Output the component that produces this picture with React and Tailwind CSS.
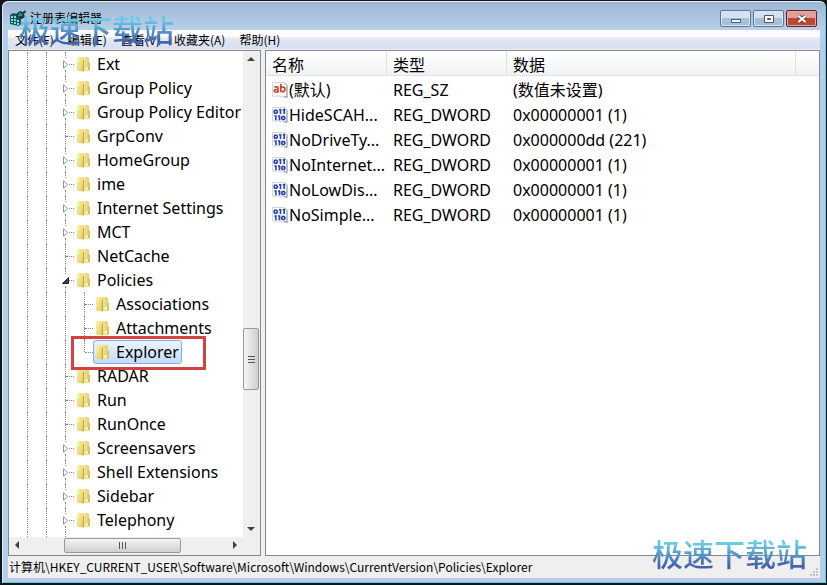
import React from "react";

const menus = ["文件(F)", "编辑(E)", "查看(V)", "收藏夹(A)", "帮助(H)"];

const keys = [
  { name: "Ext", state: "closed" },
  { name: "Group Policy", state: "closed" },
  { name: "Group Policy Editor", state: "closed" },
  { name: "GrpConv", state: "leaf" },
  { name: "HomeGroup", state: "closed" },
  { name: "ime", state: "closed" },
  { name: "Internet Settings", state: "closed" },
  { name: "MCT", state: "closed" },
  { name: "NetCache", state: "leaf" },
  { name: "Policies", state: "open" },
  { name: "Associations", state: "leaf", child: true },
  { name: "Attachments", state: "leaf", child: true },
  { name: "Explorer", state: "leaf", child: true, last: true, selected: true },
  { name: "RADAR", state: "leaf" },
  { name: "Run", state: "leaf" },
  { name: "RunOnce", state: "leaf" },
  { name: "Screensavers", state: "closed" },
  { name: "Shell Extensions", state: "closed" },
  { name: "Sidebar", state: "closed" },
  { name: "Telephony", state: "closed" },
];

const values = [
  ["(默认)", "REG_SZ", "(数值未设置)"],
  ["HideSCAH...", "REG_DWORD", "0x00000001 (1)"],
  ["NoDriveTy...", "REG_DWORD", "0x000000dd (221)"],
  ["NoInternet...", "REG_DWORD", "0x00000001 (1)"],
  ["NoLowDis...", "REG_DWORD", "0x00000001 (1)"],
  ["NoSimple...", "REG_DWORD", "0x00000001 (1)"],
];

function AppIcon() {
  return (
    <svg width="18" height="18" viewBox="0 0 18 18" aria-hidden="true">
      <path d="M1 6l3-2 8 2v9l-2 2-9-2z" fill="#16555a" />
      <path d="M2 7h2v2H2zM5 7h2v2H5zM2 10h2v2H2zM5 10h2v2H5zM8 11h2v2H8zM2 13h2v1H2zM5 13h2v2H5zM8 14h2v2H8z" fill="#7fe0d8" />
      <path d="M8 4l3-2 3 1 2-2 1 2-2 2 1 3-3 2-4-1-2-2z" fill="#173c44" />
      <path d="M10 4l2 1M13 5l-1 2M9 7l2-1" stroke="#65c9c4" fill="none" />
    </svg>
  );
}

function FolderIcon() {
  return (
    <svg className="shrink-0" width="14" height="16" viewBox="0 0 14 16" aria-hidden="true">
      <defs>
        <linearGradient id="folderBack" x1="0" x2="1">
          <stop offset="0" stopColor="#f6eca4" />
          <stop offset="1" stopColor="#dfca69" />
        </linearGradient>
        <linearGradient id="folderFront" x1="0" x2="1" y2="1">
          <stop offset="0" stopColor="#fbf3b0" />
          <stop offset="1" stopColor="#e0c750" />
        </linearGradient>
      </defs>
      <path d="M5 1h6l1 1v4l1 1v7l-1 1H5z" fill="url(#folderBack)" />
      <path d="M12 7v7" stroke="#d0ba5c" strokeWidth="1" />
      <path d="M0 2l1-1h4l2 2v11l-1 2-2-1H1l-1-1z" fill="url(#folderFront)" />
      <path d="M6.500 4v11" stroke="#bfa43e" strokeWidth="1" />
      <path d="M8 11h3v3H8z" fill="#f7efbe" />
    </svg>
  );
}

function ValueIcon({ text }) {
  return (
    <svg className="mb-[2px] shrink-0" width="16" height="16" viewBox="0 0 16 16" aria-hidden="true">
      <path d="M.5 .5h11l3.500 3v12l-3-1-3 .5-3-1.500-2 1-3.500-.5z" fill="#f7f9fc" stroke="#d0d5dc" />
      <path d="M12 .5l3 3v12l-3-1" fill="none" stroke="#8d96a1" />
      {text ? (
        <g fill="none" stroke="#c24a2c" strokeWidth="1.700">
          <path d="M2.300 4.800h2.700q1 0 1 1v4.200H3.700q-1.400 0-1.400-1.200T3.700 7.500H6" />
          <path d="M8.800 2v8M8.800 5.500q4.200-1.500 4.200 1.800T8.800 9.300" />
        </g>
      ) : (
        <g fill="none" stroke="#2a3fae" strokeWidth="1.600">
          <path d="M2.800 3.300h1.800l.7 1v1l-.7 1H2.800l-.6-1v-1zM7 2.800h1.500v4.200M10.700 2.800h1.500v4.200" />
          <path d="M2.400 9h1.500v4.200M6 9h1.500v4.200M10.300 9.500h1.800l.7 1v1l-.7 1h-1.800l-.6-1v-1z" />
        </g>
      )}
    </svg>
  );
}

function Branch({ state, last }) {
  return (
    <>
      <span className="flex h-6 w-[7px] shrink-0 flex-col items-center">
        <span className="w-0 flex-1 border-l border-dotted border-[#858585]" />
        {state !== "leaf" && (
          <button type="button" aria-label={state === "open" ? "折叠" : "展开"} className="flex h-3 w-[7px] items-center">
            <svg width="7" height="9" viewBox="0 0 7 9">
              {state === "open" ? (
                <path d="M6.500 1.500v6h-6z" fill="#404040" stroke="#262626" />
              ) : (
                <path d="M1.500 .8v7.400L5.800 4.500z" fill="#fff" stroke="#959595" />
              )}
            </svg>
          </button>
        )}
        <span className={last ? "w-0 flex-1" : "w-0 flex-1 border-l border-dotted border-[#858585]"} />
      </span>
      <span className={state === "leaf" ? "-ml-[3px] w-2 shrink-0 border-t border-dotted border-[#858585]" : "w-[5px] shrink-0 border-t border-dotted border-[#858585]"} />
    </>
  );
}

function Rails({ child }) {
  return (
    <>
      <span className="h-full w-[19px] shrink-0 border-l border-dotted border-[#858585]" />
      {child && <span className="h-full w-[19px] shrink-0 border-l border-dotted border-[#858585]" />}
      <span className="h-full w-4 shrink-0 border-l border-dotted border-[#858585]" />
    </>
  );
}

function TreeRow({ item }) {
  return (
    <li className="relative flex h-6 items-center pl-[18px]">
      <Rails child={item.child} />
      <Branch state={item.state} last={item.last} />
      <button
        type="button"
        className={
          item.selected
            ? "flex h-6 items-center gap-[6px] whitespace-nowrap rounded-[3px] border border-[#84acdd] bg-linear-to-b from-[#eaf3fd] to-[#c4dcf8] pl-[2px] pr-[2px]"
            : "flex h-6 items-center gap-[6px] whitespace-nowrap border border-transparent pl-[2px] pr-[2px]"
        }
      >
        <FolderIcon />
        <span>{item.name}</span>
      </button>
      {item.selected && (
        <span className="pointer-events-none absolute -top-1 left-[62px] z-10 h-[34px] w-[135px] border-3 border-[#d3423e]" />
      )}
    </li>
  );
}

function Arrow({ d, label }) {
  return (
    <button type="button" aria-label={label} className="flex size-4 shrink-0 items-center justify-center">
      <svg width="8" height="8" viewBox="0 0 8 8"><path d={d} fill="#404040" /></svg>
    </button>
  );
}

function Watermark() {
  return (
    <span className="bg-linear-to-b from-[#6cc9e2] from-25% to-[#4163ab] to-85% bg-clip-text font-['Noto_Sans_CJK_SC',sans-serif] text-[31px] leading-9 font-medium whitespace-nowrap text-transparent">
      极速下载站
    </span>
  );
}

export default function App() {
  return (
    <div className="h-screen overflow-hidden bg-[#10151c] pt-px pr-px pb-[2px] pl-[2px] font-['Noto_Sans','Noto_Sans_CJK_SC',sans-serif] text-black">
      <div className="relative flex h-full flex-col rounded-t-md border border-t-[#e4edf7] border-r-[#62c8e4] border-b-[#62c8e4] border-l-[#dce9f6] bg-[#b5cfea] px-[5px] pb-1">
        <header className="-mx-[5px] flex h-7 shrink-0 items-center justify-between rounded-t-md bg-linear-to-b from-[#9db6d3] to-[#b9d0ea] pr-2 pl-[6px]">
          <div className="flex items-center gap-[3px] pt-1">
            <AppIcon />
            <h1 className="font-['Noto_Sans_CJK_SC',sans-serif] text-xs">注册表编辑器</h1>
          </div>
          <div className="flex gap-[2px] pt-[5px]">
            <button type="button" aria-label="最小化" className="flex h-[17px] w-[31px] items-center justify-center rounded-[2px] border border-[#61748c] bg-linear-to-b from-[#d3e2f2] from-45% to-[#a5bfdb] to-50% shadow-[inset_0_0_0_1px_#dbe7f3]">
              <svg width="12" height="12" viewBox="0 0 12 12"><path d="M1.500 6.500h9v3h-9z" fill="#fff" stroke="#4c5766" /></svg>
            </button>
            <button type="button" aria-label="最大化" className="flex h-[17px] w-[31px] items-center justify-center rounded-[2px] border border-[#61748c] bg-linear-to-b from-[#d3e2f2] from-45% to-[#a5bfdb] to-50% shadow-[inset_0_0_0_1px_#dbe7f3]">
              <svg width="12" height="12" viewBox="0 0 12 12"><path d="M1.500 2.500h9v7h-9z" fill="#fff" stroke="#4c5766" /><path d="M4.500 5.500h3v1h-3z" fill="#8ba5c4" stroke="#4c5766" /></svg>
            </button>
            <button type="button" aria-label="关闭" className="flex h-[17px] w-[31px] items-center justify-center rounded-[2px] border border-[#5c262c] bg-linear-to-b from-[#dfa096] from-45% to-[#bd4534] to-50% shadow-[inset_0_0_0_1px_#e0aaa1]">
              <svg width="12" height="12" viewBox="0 0 12 12"><path d="M2.500 3l7 6M9.500 3l-7 6" stroke="#59464b" strokeWidth="4" /><path d="M2.500 3l7 6M9.500 3l-7 6" stroke="#fff" strokeWidth="2.200" /></svg>
            </button>
          </div>
        </header>

        <nav className="flex h-5 shrink-0 items-center gap-[14px] border-b border-[#f0f0f0] bg-linear-to-b from-[#fdfdfe] from-30% via-[#e4e8f4] via-45% to-[#d7dff0] pl-[7px] font-['Noto_Sans_CJK_SC',sans-serif] text-xs">
          {menus.map((m) => (
            <button key={m} type="button" className="whitespace-nowrap">{m}</button>
          ))}
        </nav>

        <main className="flex min-h-0 flex-1 gap-1 bg-[#f0f0f0]">
          <section className="flex w-[253px] shrink-0 flex-col border border-[#828790] bg-white">
            <div className="flex min-h-0 flex-1">
              <ul className="flex min-w-0 flex-1 flex-col overflow-hidden pt-px text-base">
                {keys.map((k) => <TreeRow key={k.name} item={k} />)}
                <li className="flex min-h-0 flex-1 pl-[18px]" aria-hidden="true">
                  <Rails child />
                </li>
              </ul>
              <div className="flex w-[17px] flex-col bg-[#efefef] pr-px">
                <Arrow label="向上" d="M0 6l4-4 4 4z" />
                <div className="flex-[261]" />
                <div className="flex h-[62px] flex-col items-center justify-center gap-[2px] rounded-[2px] border border-[#999] bg-linear-to-r from-[#f5f5f5] to-[#cfcfd2]">
                  <i className="h-px w-[7px] bg-[#555]" />
                  <i className="h-px w-[7px] bg-[#555]" />
                  <i className="h-px w-[7px] bg-[#555]" />
                </div>
                <div className="flex-[131]" />
                <Arrow label="向下" d="M0 2h8L4 6z" />
              </div>
            </div>
            <div className="flex h-[18px] shrink-0 items-center bg-[#efefef] pr-[17px] pb-[2px]">
              <Arrow label="向左" d="M6 0v8L2 4z" />
              <div className="flex-[39]" />
              <div className="flex h-[15px] w-[117px] items-center justify-center gap-[2px] rounded-[2px] border border-[#999] bg-linear-to-b from-[#f5f5f5] to-[#cfcfd2]">
                <i className="h-[7px] w-px bg-[#555]" />
                <i className="h-[7px] w-px bg-[#555]" />
                <i className="h-[7px] w-px bg-[#555]" />
              </div>
              <div className="flex-[46]" />
              <Arrow label="向右" d="M2 0l4 4-4 4z" />
            </div>
          </section>

          <section className="min-w-0 flex-1 overflow-hidden border border-[#828790] bg-white">
            <table className="w-full table-fixed border-separate border-spacing-0 text-left text-base">
              <colgroup>
                <col className="w-[121px]" />
                <col className="w-[120px]" />
                <col className="w-[289px]" />
                <col />
              </colgroup>
              <thead>
                <tr className="h-[25px] bg-linear-to-b from-white to-[#f1f2f4] leading-5">
                  <th className="border-r border-b border-[#dfe1e4] pt-1 pl-[6px] font-normal">名称</th>
                  <th className="border-r border-b border-[#dfe1e4] pt-1 pl-[6px] font-normal">类型</th>
                  <th className="border-r border-b border-[#dfe1e4] pt-1 pl-[6px] font-normal">数据</th>
                  <td className="border-b border-[#dfe1e4]" />
                </tr>
              </thead>
              <tbody className="leading-[25px]">
                <tr className="h-[2px]"><td colSpan={4} /></tr>
                {values.map(([name, type, data], i) => (
                  <tr key={name} className="h-[25px]">
                    <td className="pl-[6px]">
                      <div className="flex h-[25px] items-center gap-px whitespace-nowrap">
                        <ValueIcon text={i === 0} />
                        <span>{name}</span>
                      </div>
                    </td>
                    <td className="pl-[6px]">{type}</td>
                    <td className="pl-[6px]">{data}</td>
                    <td />
                  </tr>
                ))}
              </tbody>
            </table>
          </section>
        </main>

        <footer className="flex h-[22px] shrink-0 items-center justify-between bg-[#f0eff0] pl-px font-['Noto_Sans_CJK_SC',sans-serif] text-xs">
          <span className="whitespace-nowrap">计算机\HKEY_CURRENT_USER\Software\Microsoft\Windows\CurrentVersion\Policies\Explorer</span>
          <svg className="self-end" width="12" height="12" viewBox="0 0 12 12" aria-hidden="true">
            <path d="M8 2h2v2H8zM5 5h2v2H5zM8 5h2v2H8zM2 8h2v2H2zM5 8h2v2H5zM8 8h2v2H8z" fill="#bfc2c8" />
          </svg>
        </footer>

        <div className="pointer-events-none absolute top-[9px] left-4 flex"><Watermark /></div>
        <div className="pointer-events-none absolute right-[18px] bottom-[11px] flex"><Watermark /></div>
      </div>
    </div>
  );
}
